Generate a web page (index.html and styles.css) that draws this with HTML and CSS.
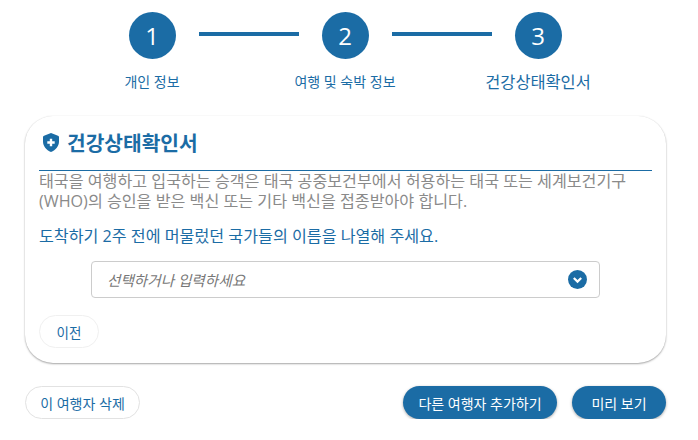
FILE: index.html
```html
<!DOCTYPE html>
<html lang="ko">
<head>
  <meta charset="UTF-8">
  <meta name="viewport" content="width=device-width, initial-scale=1.0">
  <title>건강상태확인서</title>
  <link rel="stylesheet" href="styles.css">
</head>
<body>

  <div class="stepper">
    <div class="step">
      <div class="step-circle">1</div>
      <div class="step-label">개인 정보</div>
    </div>
    <div class="step">
      <div class="step-circle">2</div>
      <div class="step-label">여행 및 숙박 정보</div>
    </div>
    <div class="step step-current">
      <div class="step-circle">3</div>
      <div class="step-label">건강상태확인서</div>
    </div>
  </div>

  <div class="card">
    <h2 class="card-title">
      <svg class="shield" viewBox="0 0 16 19" width="16" height="19">
        <path fill="#1b6ca5" fill-rule="evenodd" d="M8 0 L15 2.7 C15.6 2.9 16 3.4 16 4 V8.5 C16 13.2 12.8 17 8 19 C3.2 17 0 13.2 0 8.5 V4 C0 3.4 .4 2.9 1 2.7 Z M6.8 5.8 V8.3 H4.3 V10.7 H6.8 V13.2 H9.2 V10.7 H11.7 V8.3 H9.2 V5.8 Z"/>
      </svg>
      건강상태확인서
    </h2>
    <p class="intro">태국을 여행하고 입국하는 승객은 태국 공중보건부에서 허용하는 태국 또는 세계보건기구 (WHO)의 승인을 받은 백신 또는 기타 백신을 접종받아야 합니다.</p>
    <p class="question">도착하기 2주 전에 머물렀던 국가들의 이름을 나열해 주세요.</p>

    <div class="select-box">
      <span class="select-text">선택하거나 입력하세요</span>
      <svg class="select-arrow" viewBox="0 0 19 19" width="19" height="19">
        <circle cx="9.5" cy="9.5" r="9.5" fill="#1b6ca5"/>
        <path d="M5.8 8 L9.5 11.6 L13.2 8" fill="none" stroke="#fff" stroke-width="2.2"/>
      </svg>
    </div>

    <button type="button" class="btn btn-light btn-prev">이전</button>
  </div>

  <div class="actions">
    <button type="button" class="btn btn-outline">이 여행자 삭제</button>
    <div class="actions-right">
      <button type="button" class="btn btn-primary btn-add">다른 여행자 추가하기</button>
      <button type="button" class="btn btn-primary btn-preview">미리 보기</button>
    </div>
  </div>

</body>
</html>
```

FILE: styles.css
```css
body {
  margin: 0;
  width: 641px;
  padding: 12px 32px 0 25px;
  background-color: #ffffff;
  font-family: 'Open Sans', 'Noto Sans CJK KR', sans-serif;
  color: #1b6ca5;
}

.stepper {
  display: flex;
  justify-content: center;
  margin-left: -1px;
}

.step {
  position: relative;
  width: 193px;
  display: flex;
  flex-direction: column;
  align-items: center;
}

/* linia entre passos */
.step:not(:last-child)::after {
  content: "";
  position: absolute;
  top: 20px;
  left: 143px;
  width: 100px;
  height: 4px;
  background-color: #1b6ca5;
}

.step-circle {
  width: 47px;
  height: 47px;
  border-radius: 50%;
  background-color: #1b6ca5;
  color: #ffffff;
  font-size: 24px;
  line-height: 47px;
  text-align: center;
}

.step-label {
  margin-top: 13px;
  height: 20px;
  font-size: 14px;
  line-height: 20px;
}

.step-current .step-label {
  font-size: 16.4px;
}

.card {
  margin-top: 24px;
  height: 247px;
  box-sizing: border-box;
  padding: 10px 14px 0;
  border-radius: 28px;
  background-color: #ffffff;
  box-shadow: 0 1px 2px rgba(0, 0, 0, 0.35), 0 0 1px rgba(0, 0, 0, 0.1);
}

.card-title {
  display: flex;
  align-items: center;
  gap: 8px;
  box-sizing: border-box;
  height: 45px;
  margin: 0;
  padding: 0 0 13px 4px;
  border-bottom: 1px solid #1b6ca5;
  font-size: 20.3px;
  font-weight: 700;
}

.shield {
  margin-top: 2px;
}

.intro {
  margin: 0;
  font-size: 16.15px;
  line-height: 20px;
  color: #8a8a8a;
}

.question {
  margin: 15px 0 0;
  font-size: 16.15px;
  line-height: 20px;
}

.select-box {
  display: flex;
  align-items: center;
  justify-content: space-between;
  box-sizing: border-box;
  width: 509px;
  height: 37px;
  margin: 15px 0 0 52px;
  padding: 0 12px 0 15px;
  border: 1px solid #cccccc;
  border-radius: 4px;
}

.select-text {
  font-size: 14.6px;
  font-style: italic;
  color: #777777;
}

.btn {
  height: 33px;
  padding: 0;
  border-radius: 17px;
  font-family: inherit;
  font-size: 14px;
  cursor: pointer;
}

.btn-light {
  border: 1px solid #f0f0f0;
  background-color: #ffffff;
  color: #1b6ca5;
}

.btn-prev {
  display: block;
  width: 60px;
  margin-top: 17px;
  font-size: 13.5px;
}

.actions {
  display: flex;
  justify-content: space-between;
  margin-top: 23px;
}

.actions-right {
  display: flex;
  gap: 15px;
}

.btn-outline {
  width: 115px;
  border: 1px solid #e2e2e2;
  background-color: #ffffff;
  color: #1b6ca5;
}

.btn-primary {
  border: none;
  background-color: #1b6ca5;
  color: #ffffff;
  box-shadow: 0 1px 3px rgba(0, 0, 0, 0.35);
}

.btn-add {
  width: 154px;
}

.btn-preview {
  width: 94px;
}
```
